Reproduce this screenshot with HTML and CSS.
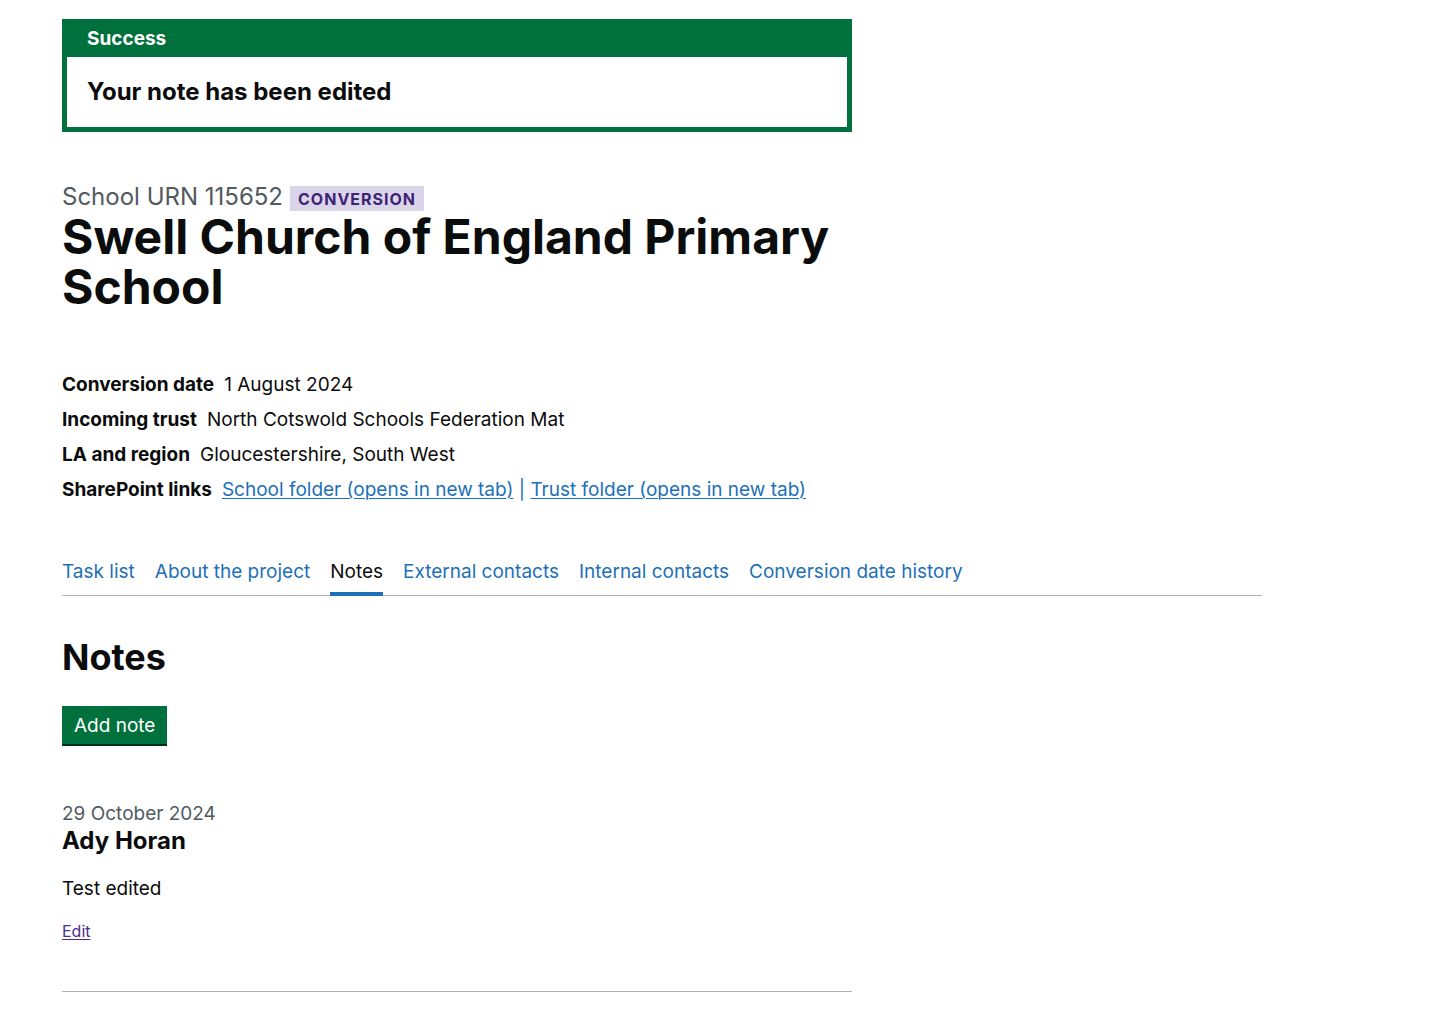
FILE: index.html
```html
<!DOCTYPE html>
<html lang="en">
<head>
<meta charset="utf-8">
<title>Notes</title>
<link rel="stylesheet" href="styles.css">
</head>
<body>
<div class="page">
  <div class="two-thirds">
    <div class="banner">
      <div class="banner-header"><h2 class="banner-title">Success</h2></div>
      <div class="banner-content"><p class="banner-heading">Your note has been edited</p></div>
    </div>

    <div class="caption-row">
      <span class="caption">School URN 115652</span>
      <strong class="tag">Conversion</strong>
    </div>
    <h1 class="heading-xl">Swell Church of England Primary School</h1>

    <dl class="summary">
      <div class="summary-row"><dt>Conversion date</dt><dd>1 August 2024</dd></div>
      <div class="summary-row"><dt>Incoming trust</dt><dd>North Cotswold Schools Federation Mat</dd></div>
      <div class="summary-row"><dt>LA and region</dt><dd>Gloucestershire, South West</dd></div>
      <div class="summary-row"><dt>SharePoint links</dt><dd><a class="link" href="#">School folder (opens in new tab)</a> <span class="sep">|</span> <a class="link" href="#">Trust folder (opens in new tab)</a></dd></div>
    </dl>
  </div>

  <nav class="tabs">
    <a class="tab" href="#">Task list</a>
    <a class="tab" href="#">About the project</a>
    <a class="tab active" href="#">Notes</a>
    <a class="tab" href="#">External contacts</a>
    <a class="tab" href="#">Internal contacts</a>
    <a class="tab" href="#">Conversion date history</a>
  </nav>

  <div class="two-thirds">
    <h2 class="heading-l">Notes</h2>
    <a class="button" href="#">Add note</a>

    <div class="note">
      <p class="note-date">29 October 2024</p>
      <h3 class="note-author">Ady Horan</h3>
      <p class="note-body">Test edited</p>
      <a class="note-edit" href="#">Edit</a>
    </div>
    <hr class="rule">
  </div>
</div>
</body>
</html>
```

FILE: styles.css
```css
* { box-sizing: border-box; }
html, body { margin: 0; padding: 0; background: #fff; }
body {
  font-family: Inter, "Noto Sans", Arial, sans-serif;
  color: #0b0c0c;
  -webkit-font-smoothing: antialiased;
}
.page {
  width: 1200px;
  margin-left: 62px;
  padding-top: 19px;
}
.two-thirds { width: 790px; }

.banner {
  border: 5px solid #00703c;
  background: #00703c;
  margin-bottom: 50px;
}
.banner-header { padding: 2px 20px 5px; border-bottom: 1px solid transparent; }
.banner-title {
  margin: 0;
  font-size: 19px;
  line-height: 25px;
  font-weight: 700;
  color: #fff;
}
.banner-content { background: #fff; padding: 20px; }
.banner-heading {
  margin: 0;
  font-size: 24px;
  line-height: 30px;
  font-weight: 700;
}

.caption-row { display: flex; align-items: center; gap: 7px; }
.caption { font-size: 24px; line-height: 30px; color: #505a5f; }
.tag {
  display: inline-block;
  background: #dbd5e9;
  color: #3d2375;
  font-size: 16px;
  line-height: 19px;
  font-weight: 700;
  text-transform: uppercase;
  letter-spacing: 1px;
  padding: 4px 8px 2px;
  margin-top: 2px;
}
.heading-xl {
  margin: 0 0 50px;
  font-size: 48px;
  line-height: 50px;
  font-weight: 700;
}

.summary { margin: 0 0 50px; padding-top: 10px; }
.summary-row { display: flex; gap: 10px; font-size: 19px; line-height: 25px; margin-bottom: 10px; }
.summary-row dt { font-weight: 700; }
.summary-row dd { margin: 0; }
.link { color: #1d70b8; text-decoration: underline; text-underline-offset: 2px; text-decoration-thickness: 1px; }
.sep { color: #1d70b8; }

.tabs {
  display: flex;
  gap: 20px;
  border-bottom: 1px solid #b1b4b6;
  margin-bottom: 41px;
}
.tab {
  font-size: 19px;
  line-height: 25px;
  color: #1d70b8;
  text-decoration: none;
  padding: 7px 0 8px;
  border-bottom: 4px solid transparent;
  margin-bottom: -1px;
}
.tab.active { color: #0b0c0c; border-bottom-color: #1d70b8; }

.heading-l {
  margin: 0 0 29px;
  font-size: 36px;
  line-height: 40px;
  font-weight: 700;
}
.button {
  display: inline-block;
  background: #00703c;
  color: #fff;
  font-size: 19px;
  line-height: 23px;
  padding: 8px 12px 7px;
  box-shadow: 0 2px 0 #002d18;
  text-decoration: none;
  margin-bottom: 57px;
}

.note-date { margin: 0; font-size: 19px; line-height: 25px; color: #505a5f; }
.note-author { margin: 0 0 20px; font-size: 24px; line-height: 30px; font-weight: 700; }
.note-body { margin: 0 0 20px; font-size: 19px; line-height: 25px; }
.note-edit { font-size: 16px; line-height: 20px; color: #4c2c92; text-decoration: underline; text-underline-offset: 2px; }
.rule { border: 0; border-top: 1px solid #b1b4b6; margin: 50px 0 0; }
```
